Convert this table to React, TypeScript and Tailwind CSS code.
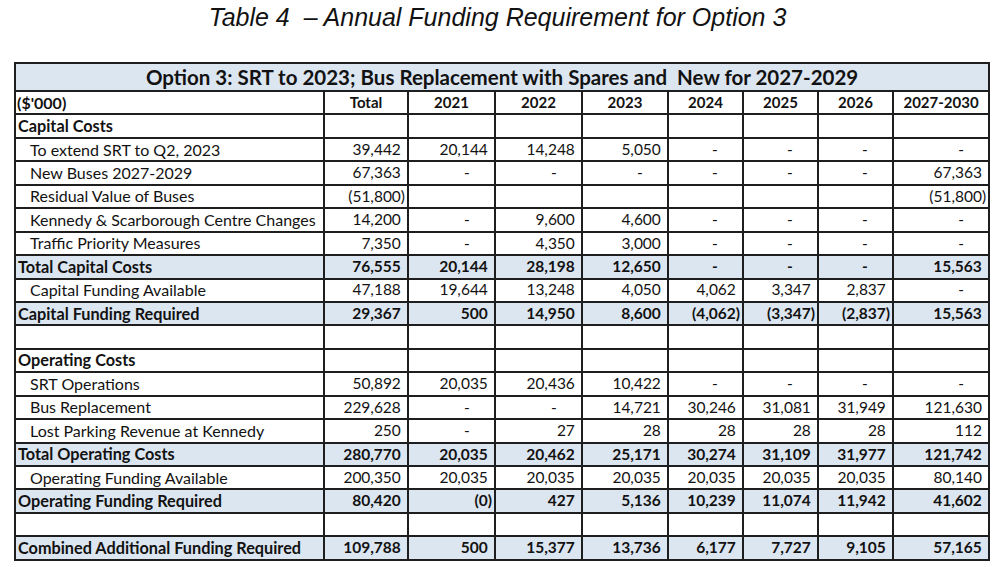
type Row = {
  label: string;
  kind: "section" | "item" | "total" | "blank";
  values?: string[];
};

const YEARS = ["Total", "2021", "2022", "2023", "2024", "2025", "2026", "2027-2030"];
const COL_WIDTHS = [309, 84, 87, 87, 86, 75, 75, 75, 96];

const ROWS: Row[] = [
  { label: "Capital Costs", kind: "section" },
  { label: "To extend SRT to Q2, 2023", kind: "item", values: ["39,442", "20,144", "14,248", "5,050", "-", "-", "-", "-"] },
  { label: "New Buses 2027-2029", kind: "item", values: ["67,363", "-", "-", "-", "-", "-", "-", "67,363"] },
  { label: "Residual Value of Buses", kind: "item", values: ["(51,800)", "", "", "", "", "", "", "(51,800)"] },
  { label: "Kennedy & Scarborough Centre Changes", kind: "item", values: ["14,200", "-", "9,600", "4,600", "-", "-", "-", "-"] },
  { label: "Traffic Priority Measures", kind: "item", values: ["7,350", "-", "4,350", "3,000", "-", "-", "-", "-"] },
  { label: "Total Capital Costs", kind: "total", values: ["76,555", "20,144", "28,198", "12,650", "-", "-", "-", "15,563"] },
  { label: "Capital Funding Available", kind: "item", values: ["47,188", "19,644", "13,248", "4,050", "4,062", "3,347", "2,837", "-"] },
  { label: "Capital Funding Required", kind: "total", values: ["29,367", "500", "14,950", "8,600", "(4,062)", "(3,347)", "(2,837)", "15,563"] },
  { label: "", kind: "blank" },
  { label: "Operating Costs", kind: "section" },
  { label: "SRT Operations", kind: "item", values: ["50,892", "20,035", "20,436", "10,422", "-", "-", "-", "-"] },
  { label: "Bus Replacement", kind: "item", values: ["229,628", "-", "-", "14,721", "30,246", "31,081", "31,949", "121,630"] },
  { label: "Lost Parking Revenue at Kennedy", kind: "item", values: ["250", "-", "27", "28", "28", "28", "28", "112"] },
  { label: "Total Operating Costs", kind: "total", values: ["280,770", "20,035", "20,462", "25,171", "30,274", "31,109", "31,977", "121,742"] },
  { label: "Operating Funding Available", kind: "item", values: ["200,350", "20,035", "20,035", "20,035", "20,035", "20,035", "20,035", "80,140"] },
  { label: "Operating Funding Required", kind: "total", values: ["80,420", "(0)", "427", "5,136", "10,239", "11,074", "11,942", "41,602"] },
  { label: "", kind: "blank" },
  { label: "Combined Additional Funding Required", kind: "total", values: ["109,788", "500", "15,377", "13,736", "6,177", "7,727", "9,105", "57,165"] },
];

// Excel accounting format: positives leave room for ")", dashes sit two digits in.
function Amount({ value }: { value: string }) {
  if (value === "") return null;
  if (value === "-") {
    return (
      <>
        -<span className="invisible">00)</span>
      </>
    );
  }
  if (value.startsWith("(")) return <>{value}</>;
  return (
    <>
      {value}
      <span className="invisible">)</span>
    </>
  );
}

const cell = "border-2 border-[#1e1e1e] h-[23.45px] p-0 leading-none";

export default function App() {
  return (
    <div className="h-[567px] w-[995px] bg-white text-[#121212] [font-family:Lato,'Liberation_Sans',sans-serif]">
      <h1 className="pt-[3px] text-center text-[25px] italic leading-[29px] [font-family:'Liberation_Sans',Arial,sans-serif]">
        Table 4&nbsp; – Annual Funding Requirement for Option 3
      </h1>

      <table className="ml-[14px] mt-[30px] w-[974px] table-fixed border-collapse text-[15.5px]">
        <colgroup>
          {COL_WIDTHS.map((w, i) => (
            <col key={i} style={{ width: w }} />
          ))}
        </colgroup>
        <tbody>
          <tr className="bg-[#dce6f1]">
            <td colSpan={9} className="h-[28px] border-2 border-[#1e1e1e] p-0 text-center text-[20.5px] font-bold leading-none">
              Option 3: SRT to 2023; Bus Replacement with Spares and&nbsp; New for 2027-2029
            </td>
          </tr>
          <tr>
            <td className={`${cell} pl-[1px] text-[16px] font-bold`}>($'000)</td>
            {YEARS.map((y) => (
              <td key={y} className={`${cell} text-center text-[15px] font-bold`}>
                {y}
              </td>
            ))}
          </tr>
          {ROWS.map((row, i) => {
            const isTotal = row.kind === "total";
            const bold = isTotal || row.kind === "section";
            return (
              <tr key={i} className={isTotal ? "bg-[#dce6f1]" : ""}>
                <td
                  className={`${cell} whitespace-nowrap ${bold ? "pl-[2px] text-[16.25px] font-bold" : "pl-[14px] text-[16px]"}`}
                >
                  {row.label}
                </td>
                {YEARS.map((y, j) => (
                  <td
                    key={y}
                    className={`${cell} whitespace-nowrap pr-[2px] text-right ${isTotal ? "font-bold" : ""}`}
                  >
                    {row.values ? <Amount value={row.values[j]} /> : null}
                  </td>
                ))}
              </tr>
            );
          })}
        </tbody>
      </table>
    </div>
  );
}
